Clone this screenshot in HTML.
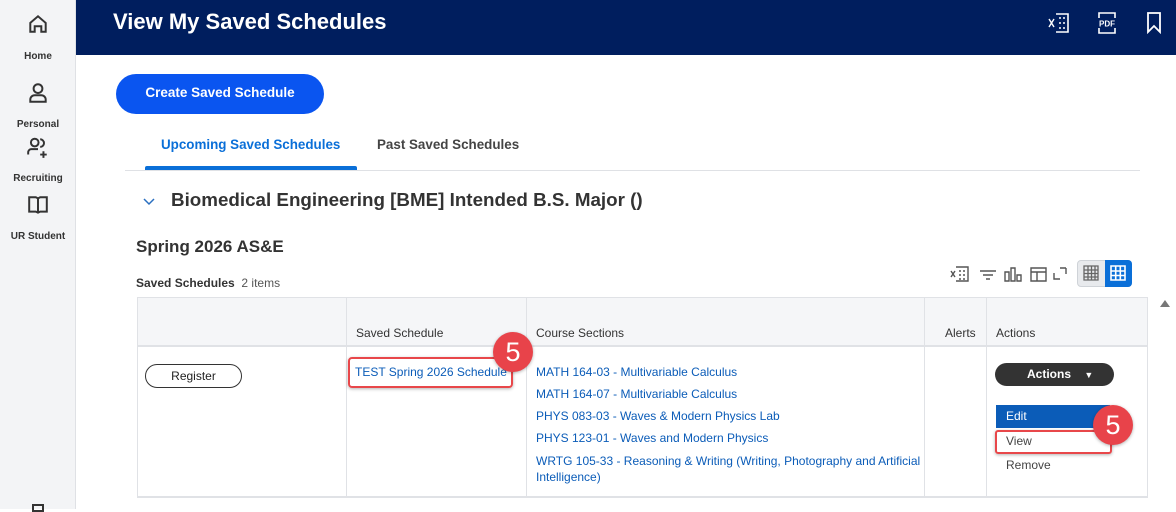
<!DOCTYPE html>
<html><head><style>
*{margin:0;padding:0;box-sizing:border-box}
body{width:1176px;height:509px;overflow:hidden;background:#fff;font-family:"Liberation Sans",Arial,sans-serif;color:#333;position:relative}
.a{position:absolute}
.side{left:0;top:0;width:76px;height:509px;background:#f3f4f6;border-right:1px solid #dfe1e5}
.si{width:76px;text-align:center;font-size:10px;font-weight:bold;color:#333}
.hdr{left:76px;top:0;width:1100px;height:55px;background:#001e5e}
.lnk{color:#0b5cb8;font-size:12px}
.th{font-size:12px;color:#333}
.vl{width:1px;background:#e0e2e6}
</style></head><body>
<div class="a side">
 <svg class="a" style="left:27px;top:13px" width="22" height="22" viewBox="0 0 20 20" fill="none" stroke="#333" stroke-width="1.8"><path d="M3 9L10 3l7 6v8h-4v-5H7v5H3z"/></svg>
 <div class="a si" style="top:51px">Home</div>
 <svg class="a" style="left:27px;top:82px" width="22" height="22" viewBox="0 0 20 20" fill="none" stroke="#333" stroke-width="1.8"><circle cx="10" cy="6" r="4"/><path d="M3 18v-2a4 4 0 0 1 4-4h6a4 4 0 0 1 4 4v2z"/></svg>
 <div class="a si" style="top:119px">Personal</div>
 <svg class="a" style="left:26px;top:136px" width="24" height="24" viewBox="0 0 22 22" fill="none" stroke="#333" stroke-width="1.8"><circle cx="8" cy="6" r="3.5"/><path d="M2 17v-2a3 3 0 0 1 3-3h6M13 3a3.5 3.5 0 0 1 0 7M16 14v6M13 17h6"/></svg>
 <div class="a si" style="top:173px">Recruiting</div>
 <svg class="a" style="left:27px;top:195px" width="22" height="20" viewBox="0 0 20 18" fill="none" stroke="#333" stroke-width="1.8"><path d="M10 3v13M2 2h6l2 1 2-1h6v13h-6l-2 1-2-1H2z"/></svg>
 <div class="a si" style="top:231px">UR Student</div>
 <div class="a" style="left:32px;top:504px;width:12px;height:8px;border:2px solid #333"></div>
</div>
<div class="a hdr">
 <div class="a" style="left:37px;top:9px;font-size:22px;font-weight:bold;color:#fff">View My Saved Schedules</div>
 <svg class="a" style="left:972px;top:13px" width="22" height="20" viewBox="0 0 22 20" fill="none" stroke="#fff" stroke-width="1.6"><path d="M8 1h12v18H8"/><path d="M1 6l5 8M6 6l-5 8" stroke-width="1.4"/><path d="M11 5h2M15 5h2M11 10h2M15 10h2M11 15h2M15 15h2"/></svg>
 <svg class="a" style="left:1020px;top:12px" width="22" height="22" viewBox="0 0 22 22" fill="none" stroke="#fff" stroke-width="1.6"><path d="M3 6V1h16v5M3 16v5h16v-5"/><text x="11" y="14.5" fill="#fff" stroke="none" font-size="8" font-weight="bold" text-anchor="middle" font-family="Liberation Sans">PDF</text></svg>
 <svg class="a" style="left:1070px;top:12px" width="16" height="22" viewBox="0 0 16 22" fill="none" stroke="#fff" stroke-width="1.8"><path d="M2 1h12v19l-6-6-6 6z"/></svg>
</div>
<div class="a" style="left:116px;top:74px;width:208px;height:40px;border-radius:20px;background:#0a55f0;color:#fff;font-size:13.5px;font-weight:bold;text-align:center;line-height:38px">Create Saved Schedule</div>
<div class="a" style="left:161px;top:137px;font-size:13.4px;font-weight:bold;color:#0a6fd8">Upcoming Saved Schedules</div>
<div class="a" style="left:377px;top:137px;font-size:13.4px;font-weight:bold;color:#444">Past Saved Schedules</div>
<div class="a" style="left:125px;top:170px;width:1015px;height:1px;background:#dfe1e5"></div>
<div class="a" style="left:145px;top:166px;width:212px;height:4px;background:#0a6fd8;border-radius:2px 2px 0 0"></div>
<svg class="a" style="left:142px;top:195px" width="14" height="12" viewBox="0 0 14 12" fill="none" stroke="#2a6fc0" stroke-width="1.5"><path d="M2 4l5 5 5-5"/></svg>
<div class="a" style="left:171px;top:189px;font-size:18.8px;font-weight:bold;color:#333">Biomedical Engineering [BME] Intended B.S. Major ()</div>
<div class="a" style="left:136px;top:237px;font-size:17px;font-weight:bold;color:#333">Spring 2026 AS&amp;E</div>
<div class="a" style="left:136px;top:276px;font-size:12px;color:#333"><b>Saved Schedules</b>&nbsp; <span style="color:#555">2 items</span></div>
<svg class="a" style="left:950px;top:264px" width="126" height="20" viewBox="0 0 126 20" fill="none" stroke="#555" stroke-width="1.4"><path d="M6 3h12v14H6M9 7h2M13 7h2M9 11h2M13 11h2M9 15h2M13 15h2"/><path d="M1 7l4 6M5 7l-4 6"/><path d="M30 7h16M33 11h10M36 15h4"/><path d="M55 8h4v9h-4zM61 4h4v13h-4zM67 11h4v6h-4z"/><path d="M81 4h15v13H81zM81 8h15M87 8v9"/><path d="M104 9V15h6M116 4h-6M116 4v6"/></svg>
<div class="a" style="left:1077px;top:260px;width:55px;height:27px;border:1px solid #cfd3d8;border-radius:4px;background:#e8eaed"></div>
<div class="a" style="left:1105px;top:260px;width:27px;height:27px;background:#0a6fd8;border-radius:0 4px 4px 0"></div>
<svg class="a" style="left:1083px;top:265px" width="44" height="16" viewBox="0 0 44 16" fill="none" stroke-width="1.3"><path d="M1 1h14v14H1zM1 5h14M1 8.5h14M1 12h14M5 1v14M8.5 1v14M12 1v14" stroke="#666"/><path d="M28 1h14v14H28zM28 6h14M28 10.5h14M32.7 1v14M37.3 1v14" stroke="#fff" stroke-width="1.6"/></svg>
<div class="a" style="left:1160px;top:300px;width:0;height:0;border-left:5px solid transparent;border-right:5px solid transparent;border-bottom:7px solid #777"></div>
<div class="a" style="left:137px;top:297px;width:1011px;height:50px;background:#f5f6f8;border-top:1px solid #e0e2e6;border-bottom:2px solid #e0e2e6"></div>
<div class="a" style="left:137px;top:496px;width:1011px;height:2px;background:#e0e2e6"></div>
<div class="a vl" style="left:137px;top:297px;height:200px"></div>
<div class="a vl" style="left:346px;top:297px;height:200px"></div>
<div class="a vl" style="left:526px;top:297px;height:200px"></div>
<div class="a vl" style="left:924px;top:297px;height:200px"></div>
<div class="a vl" style="left:986px;top:297px;height:200px"></div>
<div class="a vl" style="left:1147px;top:297px;height:200px"></div>
<div class="a th" style="left:356px;top:326px">Saved Schedule</div>
<div class="a th" style="left:536px;top:326px">Course Sections</div>
<div class="a th" style="left:945px;top:326px">Alerts</div>
<div class="a th" style="left:996px;top:326px">Actions</div>
<div class="a" style="left:145px;top:364px;width:97px;height:24px;border:1px solid #333;border-radius:12px;text-align:center;line-height:22px;font-size:12px;color:#222">Register</div>
<div class="a lnk" style="left:355px;top:365px">TEST Spring 2026 Schedule</div>
<div class="a" style="left:348px;top:357px;width:165px;height:31px;border:2.5px solid #e8474a;border-radius:4px;box-shadow:0 1px 3px rgba(0,0,0,.3)"></div>
<div class="a" style="left:493px;top:332px;width:40px;height:40px;border-radius:50%;background:#e8434a;color:#fff;font-size:27px;text-align:center;line-height:40px;box-shadow:0 1px 3px rgba(0,0,0,.3)">5</div>
<div class="a lnk" style="left:536px;top:361px;line-height:22px;width:385px">MATH 164-03 - Multivariable Calculus<br>MATH 164-07 - Multivariable Calculus<br>PHYS 083-03 - Waves &amp; Modern Physics Lab<br>PHYS 123-01 - Waves and Modern Physics</div>
<div class="a lnk" style="left:536px;top:453px;line-height:16px;width:387px">WRTG 105-33 - Reasoning &amp; Writing (Writing, Photography and Artificial Intelligence)</div>
<div class="a" style="left:995px;top:363px;width:119px;height:23px;background:#333;border-radius:12px;color:#fff;font-size:12px;font-weight:bold;line-height:23px;padding-left:32px">Actions <span style="font-size:9px;margin-left:10px">▼</span></div>
<div class="a" style="left:996px;top:405px;width:114px;height:23px;background:#0b5cb8;color:#fff;font-size:12px;line-height:23px;padding-left:10px">Edit</div>
<div class="a" style="left:1006px;top:434px;font-size:12px;color:#444">View</div>
<div class="a" style="left:995px;top:430px;width:117px;height:24px;border:2.5px solid #e8474a;border-radius:3px;box-shadow:0 1px 3px rgba(0,0,0,.3)"></div>
<div class="a" style="left:1006px;top:458px;font-size:12px;color:#444">Remove</div>
<div class="a" style="left:1093px;top:405px;width:40px;height:40px;border-radius:50%;background:#e8434a;color:#fff;font-size:27px;text-align:center;line-height:40px;box-shadow:0 1px 3px rgba(0,0,0,.3)">5</div>
</body></html>
